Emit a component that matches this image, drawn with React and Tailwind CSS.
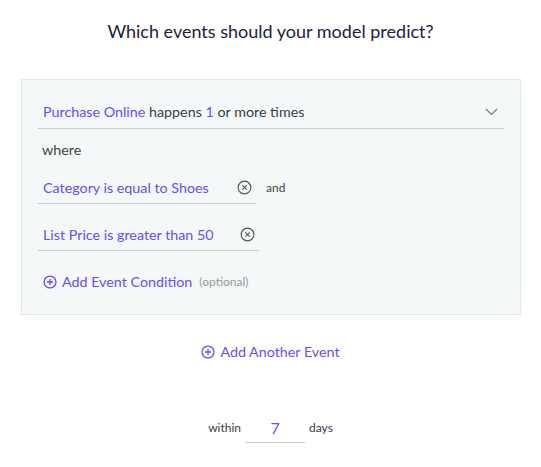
function CircleX() {
  return (
    <svg width="15" height="15" viewBox="0 0 16 16" fill="none" stroke="#555" strokeWidth="1.2">
      <circle cx="8" cy="8" r="6.8" />
      <path d="M5.7 5.7l4.6 4.6M10.3 5.7l-4.6 4.6" />
    </svg>
  )
}

function CirclePlus() {
  return (
    <svg width="14" height="14" viewBox="0 0 16 16" fill="none" stroke="#6a4cf5" strokeWidth="1.5">
      <circle cx="8" cy="8" r="6.8" />
      <path d="M8 4.5v7M4.5 8h7" />
    </svg>
  )
}

function Condition({ label, width }) {
  return (
    <div className={`flex h-[33px] items-center justify-between border-b border-[#c9cccf] pl-[5px] pr-[4px] ${width}`}>
      <span className="text-[#6a4cf5]">{label}</span>
      <CircleX />
    </div>
  )
}

export default function App() {
  return (
    <div className="flex h-[467px] w-[541px] flex-col items-center bg-white text-[14.3px] text-[#3a3a44] [font-family:Lato,'Liberation_Sans',sans-serif]">
      <h1 className="mt-[18px] text-[18px] text-[#22223a]">Which events should your model predict?</h1>

      <div className="mt-[34px] w-[500px] self-start ml-[21px] border border-[#e3e6e8] bg-[#f5f8f9] px-[16px] pt-[16px] pb-[21px]">
        <div className="flex h-[33px] items-center justify-between border-b border-[#c9cccf] pl-[5px] pr-[6px]">
          <span>
            <span className="text-[#6a4cf5]">Purchase Online</span> happens{' '}
            <span className="text-[#6a4cf5]">1</span> or more times
          </span>
          <svg width="13" height="8" viewBox="0 0 13 8" fill="none" stroke="#777" strokeWidth="1.2">
            <path d="M1 1l5.5 5.5L12 1" />
          </svg>
        </div>

        <div className="pl-[4px] pt-[10px] text-[#444]">where</div>

        <div className="mt-[11px] flex items-center gap-[10px]">
          <Condition label="Category is equal to Shoes" width="w-[218px]" />
          <span className="text-[12px] text-[#444]">and</span>
        </div>

        <div className="mt-[14px]">
          <Condition label="List Price is greater than 50" width="w-[221px]" />
        </div>

        <div className="mt-[20px] flex items-center gap-[5px] pl-[5px]">
          <CirclePlus />
          <span className="text-[#6a4cf5]">Add Event Condition</span>
          <span className="ml-[2px] text-[12px] text-[#999]">(optional)</span>
        </div>
      </div>

      <div className="mt-[26px] flex items-center gap-[5px]">
        <CirclePlus />
        <span className="text-[#6a4cf5]">Add Another Event</span>
      </div>

      <div className="mt-[54px] flex items-end gap-[4px] text-[12px] text-[#3a3a44]">
        <span className="pb-[6px]">within</span>
        <div className="w-[60px] border-b border-[#c9cccf] pb-[2px] text-center text-[16px] text-[#6a4cf5]">7</div>
        <span className="pb-[6px]">days</span>
      </div>
    </div>
  )
}
